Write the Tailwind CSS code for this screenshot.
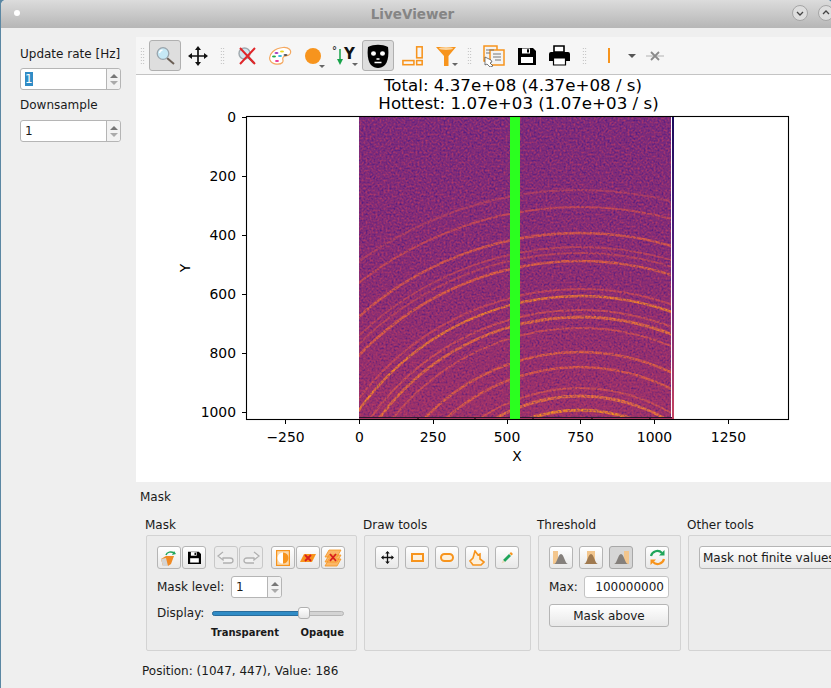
<!DOCTYPE html>
<html lang="en">
  <head>
    <meta charset="UTF-8" />
    <title>LiveViewer</title>
    <script src="https://cdn.jsdelivr.net/npm/@tailwindcss/browser@4"></script>
  </head>
  <body class="w-[831px] h-[688px] overflow-hidden bg-[#5b87a3] font-['DejaVu_Sans',sans-serif] text-[12px] text-[#1a1a1a]">
    <div class="w-[831px] h-[688px] ml-px flex flex-col bg-[#efefef] rounded-t-[5px] overflow-hidden">
      <!-- title bar -->
      <header class="relative h-[28px] shrink-0 flex items-center justify-center bg-gradient-to-b from-[#dcdcdc] to-[#b6b6b6] pr-[1px]">
        <span class="absolute left-[13px] top-[10px] w-[6px] h-[6px] rounded-full bg-white"></span>
        <h1 class="text-[13.5px] font-bold text-[#858585] pr-[7px]">LiveViewer</h1>
        <span class="absolute left-[791px] top-[5px] w-[16px] h-[16px] rounded-full border border-[#a5a5a5] bg-[#dedede] flex items-center justify-center">
          <svg width="10" height="10" viewBox="0 0 10 10"><path d="M2 4l3 3 3-3" fill="none" stroke="#444" stroke-width="1.3"/></svg>
        </span>
        <span class="absolute left-[817px] top-[5px] w-[16px] h-[16px] rounded-full border border-[#a5a5a5] bg-[#dedede] flex items-center justify-center">
          <svg width="10" height="10" viewBox="0 0 10 10"><path d="M2 6l3-3 3 3" fill="none" stroke="#444" stroke-width="1.3"/></svg>
        </span>
      </header>

      <div class="flex flex-1 min-h-0">
        <!-- left settings -->
        <aside class="w-[135px] shrink-0 pl-[19px] pt-[18px]">
          <label class="block leading-[16px]">Update rate [Hz]</label>
          <div class="mt-[6px] w-[101px] h-[22px] flex bg-white border border-[#b5b5b5] rounded-[3px]">
            <div class="flex-1 pl-[4px] leading-[20px]"><span class="bg-[#308cc6] text-white inline-block w-[8px] leading-[14px]">1</span></div>
            <div class="w-[14px] border-l border-[#b5b5b5] bg-[#f2f2f2] rounded-r-[3px] flex flex-col items-center justify-center gap-[3px]">
              <span class="w-0 h-0 border-x-[4px] border-x-transparent border-b-[4px] border-b-[#777]"></span>
              <span class="w-0 h-0 border-x-[4px] border-x-transparent border-t-[4px] border-t-[#aaa]"></span>
            </div>
          </div>
          <label class="block mt-[7px] leading-[16px]">Downsample</label>
          <div class="mt-[7px] w-[101px] h-[22px] flex bg-white border border-[#b5b5b5] rounded-[3px]">
            <div class="flex-1 pl-[4px] leading-[20px]">1</div>
            <div class="w-[14px] border-l border-[#b5b5b5] bg-[#f2f2f2] rounded-r-[3px] flex flex-col items-center justify-center gap-[3px]">
              <span class="w-0 h-0 border-x-[4px] border-x-transparent border-b-[4px] border-b-[#777]"></span>
              <span class="w-0 h-0 border-x-[4px] border-x-transparent border-t-[4px] border-t-[#aaa]"></span>
            </div>
          </div>
        </aside>

        <main class="flex-1 min-w-0 flex flex-col">
          <div class="h-[9px] shrink-0"></div>
          <!-- toolbar -->
          <div class="h-[38px] shrink-0 flex items-center bg-[#f6f6f6] border-b border-[#c4c4c4]">
            <div class="w-[13px] flex justify-center"><span class="w-[5px] h-[17px] bg-[radial-gradient(#b5b5b5_0.7px,transparent_0.8px)] bg-[length:2.5px_3px]"></span></div>
            <div class="w-[32px] h-[31px] flex items-center justify-center bg-[#dedede] border border-[#b0b0b0] rounded-[3px]">
              <svg width="20" height="20" viewBox="0 0 20 20"><path d="M12 12l7 6" stroke="#6b5f55" stroke-width="2"/><circle cx="8" cy="7.500" r="5.800" fill="#c6e8f5" stroke="#9aa5ad" stroke-width="1.300"/><path d="M4.500 7a3.500 3.500 0 0 1 3-3" stroke="#fff" stroke-width="1.300" fill="none"/></svg>
            </div>
            <div class="w-[33px] flex justify-center">
              <svg width="20" height="20" viewBox="0 0 20 20"><path d="M10 2v16M2 10h16" stroke="#111" stroke-width="1.700"/><path d="M10 0l3 4H7zM10 20l3-4H7zM0 10l4-3v6zM20 10l-4-3v6z" fill="#111"/></svg>
            </div>
            <div class="w-[16px] flex justify-center"><span class="w-[5px] h-[17px] bg-[radial-gradient(#b5b5b5_0.7px,transparent_0.8px)] bg-[length:2.5px_3px]"></span></div>
            <div class="w-[33px] flex justify-center">
              <svg width="20" height="20" viewBox="0 0 20 20"><path d="M11 11l6 6" stroke="#7b7068" stroke-width="2.200"/><circle cx="7.500" cy="7.500" r="5.500" fill="#cfe6ef" stroke="#a0a8ad" stroke-width="1.400"/><path d="M3 2l15 16M18 2L3 18" stroke="#e0262a" stroke-width="2"/></svg>
            </div>
            <div class="w-[33px] flex justify-center">
              <svg width="24" height="20" viewBox="0 0 24 20"><path d="M2 14C0 8 7 2 15 1.500c6-.4 9 3 7 6.500-2 3-6 1-7 3.500-1 2 1 3-.5 5C12 19 4 19 2 14z" fill="#fff" stroke="#f4a860" stroke-width="1.200"/><ellipse cx="8.500" cy="7" rx="2" ry="1" fill="#a03bc4"/><ellipse cx="14" cy="5.500" rx="2" ry="1" fill="#e8d81e"/><ellipse cx="6" cy="10.500" rx="2" ry="1" fill="#1ea84a"/><ellipse cx="12" cy="10" rx="2" ry="1" fill="#2ab7e0"/><ellipse cx="17.500" cy="9" rx="2" ry="1" fill="#555"/><ellipse cx="9" cy="15" rx="2" ry="1" fill="#e8308e"/></svg>
            </div>
            <div class="relative w-[33px] flex justify-center">
              <span class="w-[16px] h-[16px] rounded-full bg-[#f7941d]"></span>
              <span class="absolute left-[23px] top-[17px] w-0 h-0 border-x-[3px] border-x-transparent border-t-[3px] border-t-[#666]"></span>
            </div>
            <div class="relative w-[33px] h-[22px] flex justify-center">
              <span class="absolute left-[3px] top-[0px] text-[10px] font-bold leading-[12px] text-[#333]">°</span>
              <svg class="absolute left-[7px] top-[3px]" width="8" height="18" viewBox="0 0 8 18"><path d="M4 1v13" stroke="#17a34a" stroke-width="1.500"/><path d="M1 11l3 6 3-6z" fill="#17a34a"/></svg>
              <span class="absolute left-[15px] top-[0px] text-[15px] font-bold leading-[18px] text-[#111]">Y</span>
              <span class="absolute left-[23px] top-[18px] w-0 h-0 border-x-[3px] border-x-transparent border-t-[3px] border-t-[#666]"></span>
            </div>
            <div class="w-[32px] h-[31px] flex items-center justify-center bg-[#dedede] border border-[#b0b0b0] rounded-[3px]">
              <svg width="22" height="24" viewBox="0 0 22 24"><path d="M1 3c6-3 14-3 20 0 1 8 0 14-3 18-4 4-10 4-14 0C1 17 0 11 1 3z" fill="#000"/><ellipse cx="6.500" cy="9.500" rx="2.500" ry="2.200" fill="#fff"/><ellipse cx="15.500" cy="9.500" rx="2.500" ry="2.200" fill="#fff"/><path d="M9.500 15h3M7.500 18.500h7" stroke="#fff" stroke-width="1.400"/></svg>
            </div>
            <div class="w-[36px] flex justify-center">
              <svg class="ml-[2px]" width="22" height="22" viewBox="0 0 24 22"><g fill="none" stroke="#f7941d" stroke-width="1.700"><rect x="1" y="16" width="12" height="4.500"/><rect x="16" y="16" width="6" height="4.500"/><rect x="16" y="1" width="6" height="12"/></g></svg>
            </div>
            <div class="relative w-[31px] flex justify-center">
              <svg width="22" height="22" viewBox="0 0 22 22"><path d="M1 2h20l-7.500 9v10H9V11z" fill="#f7941d"/><ellipse cx="11" cy="3.500" rx="7" ry="1.500" fill="#fbd49e"/></svg>
              <span class="absolute left-[22px] top-[18px] w-0 h-0 border-x-[3px] border-x-transparent border-t-[3px] border-t-[#666]"></span>
            </div>
            <div class="w-[16px] flex justify-center"><span class="w-[5px] h-[17px] bg-[radial-gradient(#b5b5b5_0.7px,transparent_0.8px)] bg-[length:2.5px_3px]"></span></div>
            <div class="w-[33px] flex justify-center">
              <svg width="22" height="22" viewBox="0 0 22 22"><rect x="1" y="1" width="13" height="15" fill="#f4f4f4" stroke="#f7941d" stroke-width="1.500"/><rect x="7" y="5" width="14" height="15" fill="#f4f4f4" stroke="#f7941d" stroke-width="1.500"/><path d="M3 5h8M3 8h4M10 9h8M10 12h8M12 15h6" stroke="#777" stroke-width="1.200"/><path d="M2 12l6 3 1 2-2 1 3 3-3 1-3-3-2 1z" fill="#fff" stroke="#444" stroke-width=".7"/></svg>
            </div>
            <div class="w-[33px] flex justify-center">
              <svg width="18" height="18" viewBox="0 0 18 18"><path d="M0 1h15l3 3v14H0z" fill="#000"/><rect x="4" y="1.500" width="8" height="5" fill="#fff"/><rect x="9" y="2.300" width="2" height="3.200" fill="#000"/><rect x="3" y="10" width="12" height="6" fill="#fff"/></svg>
            </div>
            <div class="w-[33px] flex justify-center">
              <svg width="21" height="21" viewBox="0 0 21 21"><path d="M5 1h10v6H5z" fill="#fff" stroke="#000" stroke-width="1.600"/><path d="M2 7h17a2 2 0 0 1 2 2v7h-4v-3H4v3H0V9a2 2 0 0 1 2-2z" fill="#000"/><path d="M4.500 13h12v7h-12z" fill="#fff" stroke="#000" stroke-width="1.200"/></svg>
            </div>
            <div class="w-[16px] flex justify-center"><span class="w-[5px] h-[17px] bg-[radial-gradient(#b5b5b5_0.7px,transparent_0.8px)] bg-[length:2.5px_3px]"></span></div>
            <div class="w-[33px] flex justify-center"><span class="w-[2px] h-[15px] bg-[#f7941d]"></span></div>
            <div class="w-[13px] flex justify-center"><span class="w-0 h-0 border-x-[4px] border-x-transparent border-t-[4px] border-t-[#555]"></span></div>
            <div class="w-[33px] flex justify-center">
              <svg width="18" height="12" viewBox="0 0 18 12"><path d="M0 6h18" stroke="#c8c8c8" stroke-width="1.500"/><path d="M5 2l8 8M13 2l-8 8" stroke="#8a8a8a" stroke-width="1.800"/></svg>
            </div>
          </div>

          <!-- matplotlib canvas -->
          <svg class="block shrink-0 bg-white" width="695" height="407" viewBox="136 75 695 407" font-family="DejaVu Sans, sans-serif" fill="#000">
            <defs>
              <linearGradient id="base" x1="0" y1="0" x2="0" y2="1">
                <stop offset="0" stop-color="#762a7e"/>
                <stop offset="0.5" stop-color="#842c76"/>
                <stop offset="1" stop-color="#9e3268"/>
              </linearGradient>
              <linearGradient id="edge" x1="0" y1="0" x2="0" y2="1">
                <stop offset="0" stop-color="#1b0c5c"/>
                <stop offset="0.5" stop-color="#5a2080"/>
                <stop offset="1" stop-color="#c84460"/>
              </linearGradient>
              <filter id="noise" x="0" y="0" width="100%" height="100%" color-interpolation-filters="sRGB">
                <feTurbulence type="fractalNoise" baseFrequency="0.5" numOctaves="2" seed="7"/>
                <feColorMatrix type="matrix" values="0 0 0 0 0.26  0 0 0 0 0.09  0 0 0 0 0.52  1.8 0 0 0 -0.76"/>
              </filter>
              <filter id="noise2" x="0" y="0" width="100%" height="100%" color-interpolation-filters="sRGB">
                <feTurbulence type="fractalNoise" baseFrequency="0.5" numOctaves="2" seed="23"/>
                <feColorMatrix type="matrix" values="0 0 0 0 0.76  0 0 0 0 0.24  0 0 0 0 0.38  0 1.8 0 0 -0.72"/>
              </filter>
              <filter id="soft"><feGaussianBlur stdDeviation="0.7"/></filter>
              <clipPath id="det"><rect x="359" y="117" width="312" height="300"/></clipPath>
            </defs>

            <text x="513" y="91" font-size="16.660" text-anchor="middle">Total: 4.37e+08 (4.37e+08 / s)</text>
            <text x="518.500" y="109" font-size="16.660" text-anchor="middle">Hottest: 1.07e+03 (1.07e+03 / s)</text>

            <g clip-path="url(#det)">
              <rect x="359" y="117" width="312" height="300" fill="url(#base)"/>
              <g fill="none" filter="url(#soft)" opacity=".9">
                <circle cx="580" cy="567" r="377" stroke="#c04a58" stroke-width="2.200" opacity=".8"/>
                <circle cx="580" cy="567" r="360" stroke="#d85448" stroke-width="2.200" opacity=".9"/>
                <circle cx="580" cy="567" r="334" stroke="#e8663c" stroke-width="2.400"/>
                <circle cx="580" cy="567" r="320" stroke="#cc5050" stroke-width="1.800" opacity=".9"/>
                <circle cx="580" cy="567" r="314" stroke="#cc5050" stroke-width="1.800" opacity=".9"/>
                <circle cx="580" cy="567" r="306" stroke="#ec6c38" stroke-width="2.500"/>
                <circle cx="580" cy="567" r="278" stroke="#d05050" stroke-width="2"/>
                <circle cx="580" cy="567" r="271" stroke="#ff8f22" stroke-width="2.400"/>
                <circle cx="580" cy="567" r="257" stroke="#d8584c" stroke-width="2"/>
                <circle cx="580" cy="567" r="250" stroke="#f27c30" stroke-width="2.800"/>
                <circle cx="580" cy="567" r="239" stroke="#d8584c" stroke-width="1.900"/>
                <circle cx="580" cy="567" r="215" stroke="#ec6c38" stroke-width="2.500"/>
                <circle cx="580" cy="567" r="200" stroke="#e8663c" stroke-width="2.400"/>
                <circle cx="580" cy="567" r="179" stroke="#dc5c48" stroke-width="2"/>
                <circle cx="580" cy="567" r="171" stroke="#f78230" stroke-width="2.800"/>
                <circle cx="580" cy="567" r="157" stroke="#ff9a1a" stroke-width="3"/>
              </g>
              <rect x="359" y="117" width="312" height="300" filter="url(#noise)"/>
              <rect x="359" y="117" width="312" height="300" filter="url(#noise2)"/>
            </g>
            <rect x="359" y="417" width="313" height="3" fill="#a83a66"/>
            <rect x="359" y="417" width="313" height="1" fill="#2a1a30"/>
            <rect x="672" y="117" width="2" height="303" fill="url(#edge)"/>
            <rect x="510" y="117" width="10" height="303" fill="#2bff1f"/>

            <path d="M418 418v2M475 418v2M533 418v2M592 418v2M650 418v2" stroke="#000"/>
            <rect x="246.500" y="116.500" width="542" height="303" fill="none" stroke="#000" stroke-width="1.100"/>

            <path d="M285.500 420v4M359.500 420v4M433.500 420v4M507.500 420v4M580.500 420v4M654.500 420v4M728.500 420v4M242 117.500h4M242 176.500h4M242 235.500h4M242 294.500h4M242 353.500h4M242 412.500h4" stroke="#000" fill="none"/>

            <g font-size="13.900" text-anchor="middle">
              <text x="285.500" y="442">−250</text>
              <text x="359.500" y="442">0</text>
              <text x="433" y="442">250</text>
              <text x="507" y="442">500</text>
              <text x="580.500" y="442">750</text>
              <text x="654.500" y="442">1000</text>
              <text x="728.500" y="442">1250</text>
            </g>
            <g font-size="13.900" text-anchor="end">
              <text x="236" y="122">0</text>
              <text x="236" y="181">200</text>
              <text x="236" y="240">400</text>
              <text x="236" y="299">600</text>
              <text x="236" y="358">800</text>
              <text x="236" y="417">1000</text>
            </g>
            <text x="517" y="461" font-size="13.900" text-anchor="middle">X</text>
            <text x="0" y="0" font-size="13.900" text-anchor="middle" transform="translate(190 268) rotate(-90)">Y</text>
          </svg>

          <!-- sash -->
          <div class="h-[6px] shrink-0 flex justify-center">
            <span class="mt-[1px] ml-[-1px] w-[16px] h-[2px] bg-[radial-gradient(#aaa_0.6px,transparent_0.7px)] bg-[length:3px_2px]"></span>
          </div>
        </main>
      </div>
    </div>

    <!-- dock over the lower right of the window -->
    <section class="absolute left-[136px] top-[488px] w-[695px] h-[200px] bg-[#efefef] overflow-hidden">
      <h2 class="pl-[4px] leading-[18px]">Mask</h2>
      <div class="mt-[11px] pl-[10px] flex gap-[7px] w-[760px]">
        <!-- Mask group -->
        <div class="w-[211px] shrink-0">
          <h3 class="-ml-px leading-[17px] h-[18px]">Mask</h3>
          <div class="h-[116px] border border-[#d3d3d3] rounded-[2px] bg-[#ececec] pt-[10px] pl-[10px]">
            <div class="flex items-center">
              <button class="w-[24px] h-[23px] flex items-center justify-center bg-gradient-to-b from-white to-[#e8e8e8] border border-[#b5b5b5] rounded-[3px]">
                <svg width="18" height="18" viewBox="0 0 18 18"><path d="M1 10l5-3h8l-3 8-3 2H3z" fill="#f08a24"/><path d="M1 10l2 7h5l-2-8z" fill="#d4d4d4"/><path d="M6 6c1-3 5-4 8-2" fill="none" stroke="#1fa55a" stroke-width="1.500"/><path d="M16 5l-4 1 2-4z" fill="#1fa55a"/></svg>
              </button>
              <button class="ml-px w-[24px] h-[23px] flex items-center justify-center bg-gradient-to-b from-white to-[#e8e8e8] border border-[#b5b5b5] rounded-[3px]">
                <svg width="13" height="13" viewBox="0 0 18 18"><path d="M0 1h15l3 3v14H0z" fill="#000"/><rect x="4" y="1.500" width="8" height="5" fill="#fff"/><rect x="9" y="2.300" width="2" height="3.200" fill="#000"/><rect x="3" y="10" width="12" height="6" fill="#fff"/></svg>
              </button>
              <button class="ml-[8px] w-[24px] h-[23px] flex items-center justify-center bg-[#ececec] border border-[#c8c8c8] rounded-[3px]">
                <svg width="18" height="14" viewBox="0 0 18 14"><path d="M6 1L1 5l5 4V7h7c2 0 3 1 3 2.500S15 12 13 12H6" fill="#f2f2f2" stroke="#b0b0b0" stroke-width="1.300"/></svg>
              </button>
              <button class="ml-px w-[24px] h-[23px] flex items-center justify-center bg-[#ececec] border border-[#c8c8c8] rounded-[3px]">
                <svg width="18" height="14" viewBox="0 0 18 14"><path d="M12 1l5 4-5 4V7H5C3 7 2 8 2 9.500S3 12 5 12h7" fill="#f2f2f2" stroke="#b0b0b0" stroke-width="1.300"/></svg>
              </button>
              <button class="ml-[8px] w-[24px] h-[23px] flex items-center justify-center bg-gradient-to-b from-white to-[#e8e8e8] border border-[#b5b5b5] rounded-[3px]">
                <svg width="14" height="16" viewBox="0 0 14 16"><rect x=".6" y=".6" width="12.800" height="14.800" fill="#fbd9ac" stroke="#f7941d" stroke-width="1.200"/><path d="M7 2.500a5.500 5.500 0 0 1 0 11z" fill="#f7941d"/><path d="M7 2.500a5.500 5.500 0 0 0 0 11z" fill="#fff"/></svg>
              </button>
              <button class="ml-px w-[24px] h-[23px] flex items-center justify-center bg-gradient-to-b from-white to-[#e8e8e8] border border-[#b5b5b5] rounded-[3px]">
                <svg width="18" height="14" viewBox="0 0 18 14"><path d="M5 3h12l-4 8H1z" fill="#f7941d"/><path d="M6 4l6 6M12 4l-6 6" stroke="#d81f1f" stroke-width="1.800"/></svg>
              </button>
              <button class="ml-px w-[24px] h-[23px] flex items-center justify-center bg-gradient-to-b from-white to-[#e8e8e8] border border-[#b5b5b5] rounded-[3px]">
                <svg width="18" height="18" viewBox="0 0 18 18"><path d="M5 1h12l-4 7H1zM5 6h12l-4 7H1zM5 10h12l-4 7H1z" fill="#fbb768" stroke="#f7941d" stroke-width=".8"/><path d="M6 5l6 7M12 5l-6 7" stroke="#d81f1f" stroke-width="1.800"/></svg>
              </button>
            </div>
            <div class="mt-[7px] flex items-center h-[22px]">
              <span class="w-[74px]">Mask level:</span>
              <div class="w-[51px] h-[22px] flex bg-white border border-[#b5b5b5] rounded-[3px]">
                <div class="flex-1 pl-[4px] leading-[20px]">1</div>
                <div class="w-[14px] border-l border-[#b5b5b5] bg-[#f2f2f2] rounded-r-[3px] flex flex-col items-center justify-center gap-[3px]">
                  <span class="w-0 h-0 border-x-[4px] border-x-transparent border-b-[4px] border-b-[#777]"></span>
                  <span class="w-0 h-0 border-x-[4px] border-x-transparent border-t-[4px] border-t-[#aaa]"></span>
                </div>
              </div>
            </div>
            <div class="mt-[4px] flex items-center h-[22px]">
              <span class="w-[55px]">Display:</span>
              <div class="relative w-[132px] h-[5px] rounded-full bg-[#d4d4d4] border border-[#b5b5b5]">
                <div class="w-[90px] h-full rounded-l-full bg-[#308cc6] -my-px -ml-px box-content border border-[#2a6d9c]"></div>
                <span class="absolute left-[85px] top-[-5px] w-[12px] h-[12px] rounded-[3px] bg-gradient-to-b from-white to-[#e6e6e6] border border-[#b0b0b0]"></span>
              </div>
            </div>
            <div class="flex w-[133px] ml-[54px] mt-[2px] justify-between text-[10px] font-bold leading-[14px]">
              <span>Transparent</span><span>Opaque</span>
            </div>
          </div>
        </div>

        <!-- Draw tools -->
        <div class="w-[167px] shrink-0">
          <h3 class="-ml-px leading-[17px] h-[18px]">Draw tools</h3>
          <div class="h-[116px] border border-[#d3d3d3] rounded-[2px] bg-[#ececec] pt-[10px] pl-[10px]">
            <div class="flex gap-[6px]">
              <button class="w-[24px] h-[23px] flex items-center justify-center bg-gradient-to-b from-white to-[#e8e8e8] border border-[#b5b5b5] rounded-[3px]">
                <svg width="13" height="13" viewBox="0 0 20 20"><path d="M10 2v16M2 10h16" stroke="#111" stroke-width="2"/><path d="M10 0l3.500 4h-7zM10 20l3.500-4h-7zM0 10l4-3.500v7zM20 10l-4-3.500v7z" fill="#111"/></svg>
              </button>
              <button class="w-[24px] h-[23px] flex items-center justify-center bg-gradient-to-b from-white to-[#e8e8e8] border border-[#b5b5b5] rounded-[3px]">
                <span class="w-[13px] h-[9px] border-2 border-[#f7941d] bg-[#fdf0dc]"></span>
              </button>
              <button class="w-[24px] h-[23px] flex items-center justify-center bg-gradient-to-b from-white to-[#e8e8e8] border border-[#b5b5b5] rounded-[3px]">
                <span class="w-[14px] h-[9px] rounded-full border-2 border-[#f7941d] bg-[#fdf0dc]"></span>
              </button>
              <button class="w-[24px] h-[23px] flex items-center justify-center bg-gradient-to-b from-white to-[#e8e8e8] border border-[#b5b5b5] rounded-[3px]">
                <svg width="16" height="16" viewBox="0 0 16 16"><path d="M6 1l3 4 2-1 0 5 4 3-3 3H4L1 11l3-3z" fill="#fdf0dc" stroke="#f7941d" stroke-width="1.600"/></svg>
              </button>
              <button class="w-[24px] h-[23px] flex items-center justify-center bg-gradient-to-b from-white to-[#e8e8e8] border border-[#b5b5b5] rounded-[3px]">
                <svg width="14" height="14" viewBox="0 0 14 14"><path d="M3 9l6-6 2 2-6 6z" fill="#1fa55a"/><path d="M9.500 2.500L11 1l2 2-1.500 1.500z" fill="#f7941d"/><path d="M3 9l-1.500 3.500L5 11z" fill="#e8d8b8"/></svg>
              </button>
            </div>
          </div>
        </div>

        <!-- Threshold -->
        <div class="w-[143px] shrink-0">
          <h3 class="-ml-px leading-[17px] h-[18px]">Threshold</h3>
          <div class="h-[116px] border border-[#d3d3d3] rounded-[2px] bg-[#ececec] pt-[10px] pl-[10px] pr-[11px]">
            <div class="flex">
              <button class="w-[24px] h-[23px] flex items-center justify-center bg-gradient-to-b from-white to-[#e8e8e8] border border-[#b5b5b5] rounded-[3px]">
                <svg width="16" height="14" viewBox="0 0 16 14"><rect x="0" y="0" width="5" height="13" fill="#f3c68d"/><path d="M1 13c3 0 4-10 7-10s4 10 7 10z" fill="#85807c"/></svg>
              </button>
              <button class="ml-[6px] w-[24px] h-[23px] flex items-center justify-center bg-gradient-to-b from-white to-[#e8e8e8] border border-[#b5b5b5] rounded-[3px]">
                <svg width="16" height="14" viewBox="0 0 16 14"><rect x="4" y="0" width="8" height="13" fill="#f3c68d"/><path d="M1 13c3 0 4-10 7-10s4 10 7 10z" fill="#a07a50"/></svg>
              </button>
              <button class="ml-[6px] w-[24px] h-[23px] flex items-center justify-center bg-[#d6d6d6] border border-[#a8a8a8] rounded-[3px]">
                <svg width="16" height="14" viewBox="0 0 16 14"><rect x="11" y="0" width="5" height="13" fill="#f3c68d"/><path d="M1 13c3 0 4-10 7-10s4 10 7 10z" fill="#85807c"/></svg>
              </button>
              <button class="ml-[12px] w-[24px] h-[23px] flex items-center justify-center bg-gradient-to-b from-white to-[#e8e8e8] border border-[#b5b5b5] rounded-[3px]">
                <svg width="17" height="17" viewBox="0 0 17 17"><path d="M2 7a6.500 6.500 0 0 1 11-3" fill="none" stroke="#1fa55a" stroke-width="2.200"/><path d="M15.500 1v5.500H10z" fill="#1fa55a"/><path d="M15 10a6.500 6.500 0 0 1-11 3" fill="none" stroke="#f7941d" stroke-width="2.200"/><path d="M1.500 16v-5.500H7z" fill="#f7941d"/></svg>
              </button>
            </div>
            <div class="mt-[7px] flex items-center h-[22px]">
              <span class="w-[35px]">Max:</span>
              <div class="w-[85px] h-[22px] bg-white border border-[#c4c4c4] rounded-[3px] text-right pr-[4px] leading-[20px]">100000000</div>
            </div>
            <button class="mt-[6px] block w-[120px] h-[23px] bg-gradient-to-b from-white to-[#e8e8e8] border border-[#b5b5b5] rounded-[3px] text-center leading-[20px]">Mask above</button>
          </div>
        </div>

        <!-- Other tools -->
        <div class="w-[200px] shrink-0">
          <h3 class="-ml-px leading-[17px] h-[18px]">Other tools</h3>
          <div class="h-[116px] border border-[#d3d3d3] rounded-[2px] bg-[#ececec] pt-[10px] pl-[10px]">
            <button class="w-[170px] h-[23px] bg-gradient-to-b from-white to-[#e8e8e8] border border-[#b5b5b5] rounded-[3px] text-left pl-[3px] leading-[20px]">Mask not finite values</button>
          </div>
        </div>
      </div>
      <p class="mt-[12px] pl-[6px] leading-[16px]">Position: (1047, 447), Value: 186</p>
    </section>
  </body>
</html>
